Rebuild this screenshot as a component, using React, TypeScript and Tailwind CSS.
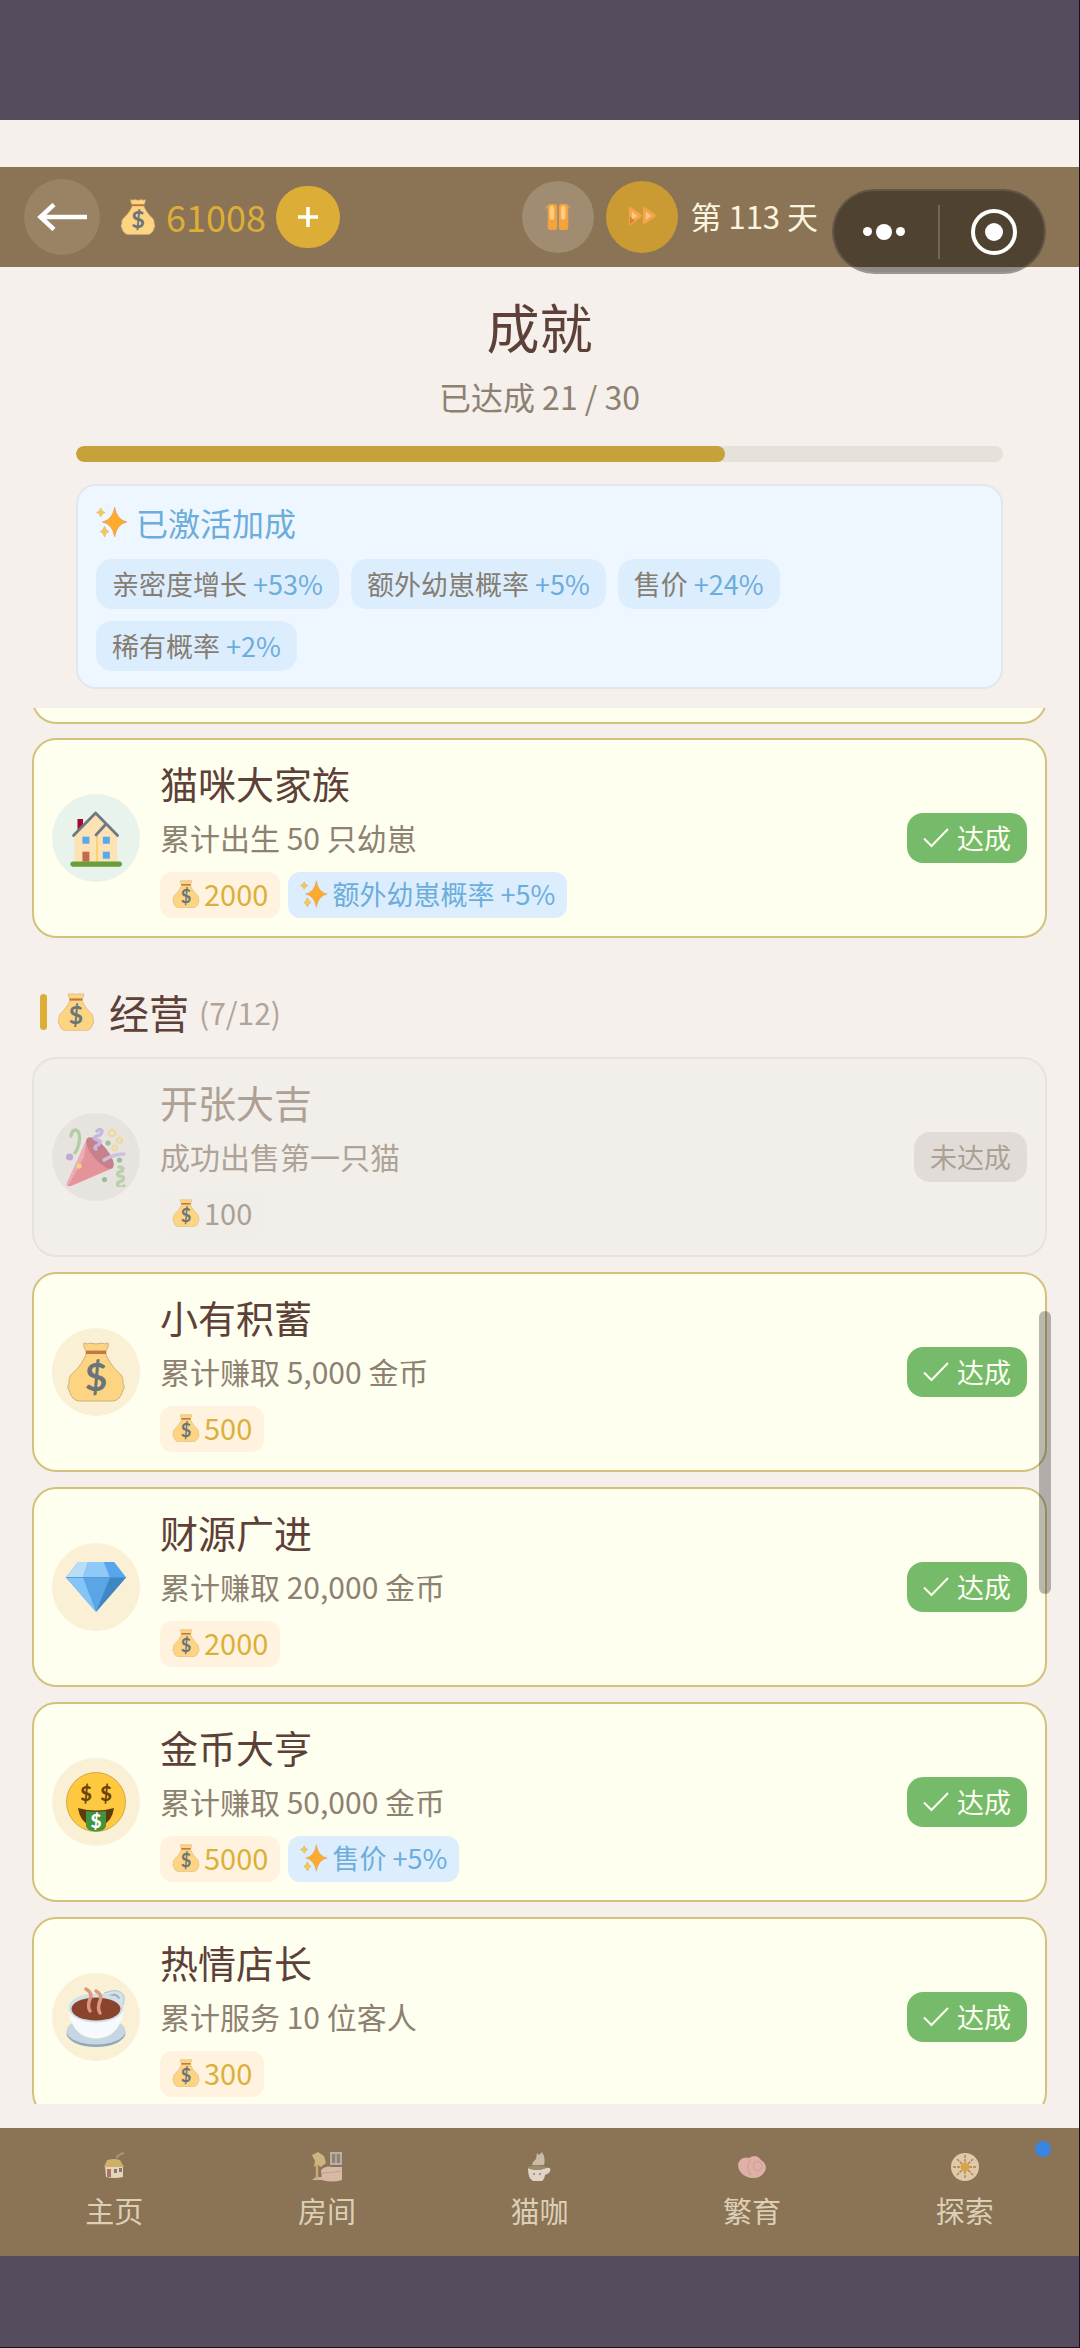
import type { ReactNode } from "react";
import clsx from "clsx";

interface IconProps {
  className?: string;
}

interface Achievement {
  title: string;
  desc: string;
  coins: number;
  bonus?: string;
  done: boolean;
  icon: ReactNode;
  iconBg: string;
}

function MoneyBag({ className }: IconProps) {
  return (
    <svg viewBox="0 0 60 60" className={className} aria-hidden="true">
      <path d="M18 1q3 2 6 0q6 2 12 0q3 2 6 0q1 4-2 8l0 4c4 8 7 12 12 17c5 4 5 7 5 11c2 4 1 6-1 9c0 4-5 9-9 9H13c-4 0-9-5-9-9c-2-3-3-5-1-9c0-4 0-7 5-11c5-5 8-9 12-17v-4q-3-4-2-8z" fill="#fdd482" stroke="#cfae74" strokeWidth="1" />
      <rect x="20" y="8.6" width="20" height="3.4" fill="#c07744" />
      <text x="30" y="49" textAnchor="middle" fontFamily="Lato, sans-serif" fontWeight="700" fontSize="39" fill="#6b7478">$</text>
    </svg>
  );
}

function Sparkles({ className }: IconProps) {
  return (
    <svg viewBox="0 0 60 60" className={className} aria-hidden="true">
      <path d="M35 2q4 24 23 28q-19 4-23 28q-4-24-23-28q19-4 23-28z" fill="#fdab2f" stroke="#d9954a" strokeWidth="1" />
      <path d="M9 4q2 7 8 8q-6 1-8 8q-2-7-8-8q6-1 8-8z" fill="#f9c84f" stroke="#d9a54a" strokeWidth="1" />
      <path d="M16 38q2 8 8 10q-6 2-8 10q-2-8-8-10q6-2 8-10z" fill="#f9c84f" stroke="#d9a54a" strokeWidth="1" />
    </svg>
  );
}

function House({ className }: IconProps) {
  return (
    <svg viewBox="0 0 60 60" className={className} aria-hidden="true">
      <rect x="11.5" y="11" width="5.5" height="12" fill="#a5082a" />
      <path d="M8.5 27L29.6 6l21.5 21v27H8.5z" fill="#fde3b3" />
      <path d="M31 28v26" stroke="#fcc95a" strokeWidth="1.4" />
      <path d="M7.5 27.5L29.6 5l22 22.5M40 16L30 27" fill="none" stroke="#6e7a83" strokeWidth="2.8" strokeLinecap="round" strokeLinejoin="round" />
      <g fill="#55a9ec">
        <rect x="16.4" y="28.7" width="7" height="7" />
        <rect x="36.8" y="28.7" width="7" height="7" />
        <rect x="36.8" y="43.7" width="7" height="7" />
      </g>
      <rect x="16.4" y="43.7" width="7" height="10" fill="#c46a4c" />
      <rect x="4.4" y="53.4" width="51.6" height="5.4" rx="2.7" fill="#689f38" />
    </svg>
  );
}

function PartyPopper({ className }: IconProps) {
  return (
    <svg viewBox="0 0 60 60" className={className} aria-hidden="true">
      <path d="M21 12L1 56q-1 4 4 3l42-18z" fill="#e2455a" />
      <path d="M21 12L1 56q-1 2 1 3l16-29z" fill="#f07a8a" />
      <ellipse cx="34" cy="26" rx="7.5" ry="19.5" transform="rotate(-40 34 26)" fill="#a8203a" />
      <g fill="none" strokeLinecap="round" strokeWidth="3.4">
        <path d="M5 9q1-6 5-6q5 2 3 13q-1 6-4 10" stroke="#7fb56a" />
        <path d="M31 4q3-3 5 0q0 4-5 5q-6 2 0 4q6 1 1 5q-5 2-2 4" stroke="#a78bda" />
        <path d="M38 33q10-6 20-6" stroke="#b39ddb" />
        <path d="M53 40q6 0 3 4q-7 2-3 5q7 0 3 5q-7 1-3 6q4 1 5-1" stroke="#8bc07a" />
      </g>
      <g fill="none" stroke="#f5cf50" strokeWidth="2">
        <circle cx="46" cy="6" r="3.2" />
        <circle cx="53.5" cy="13.5" r="2.6" />
        <circle cx="48.5" cy="21" r="2.3" />
      </g>
      <circle cx="3.6" cy="30" r="3.6" fill="#9575cd" />
      <g fill="#4f9c56">
        <circle cx="42" cy="16" r="2.6" />
        <circle cx="53.5" cy="33" r="2.6" />
        <circle cx="38.5" cy="52.5" r="2.6" />
      </g>
      <circle cx="13" cy="39" r="2.6" fill="#ffca28" />
    </svg>
  );
}

function Diamond({ className }: IconProps) {
  return (
    <svg viewBox="0 0 60 60" className={className} aria-hidden="true">
      <path d="M12 5h36l12 15.5L30 55L0 20.5z" fill="#5aa5e6" />
      <path d="M12 5h10l-5 15.5H0z" fill="#b9dcf7" />
      <path d="M22 5h16l6 15.5H17z" fill="#8ec9f8" />
      <path d="M0 20.5h17L30 55z" fill="#85c4f7" />
      <path d="M44 20.5h16L30 55z" fill="#3f86c4" />
      <path d="M38 5h10l12 15.5H44z" fill="#57a6ec" />
      <path d="M0 20.5h60" stroke="#4b93d3" strokeWidth="0.8" />
    </svg>
  );
}

function MoneyFace({ className }: IconProps) {
  return (
    <svg viewBox="0 0 60 60" className={className} aria-hidden="true">
      <circle cx="30" cy="30" r="29.5" fill="#ffc93f" stroke="#c99a3c" strokeWidth="0.8" />
      <path d="M12 36q18 5 36 0q-2 14-12 17H24q-10-3-12-17z" fill="#5f3a0a" />
      <path d="M20 39q10 1.5 20 0v15q-1 5-10 5.5q-9-.5-10-5.5z" fill="#43923f" />
      <g textAnchor="middle" fontFamily="Lato, sans-serif" fontWeight="900">
        <text x="20" y="29" fontSize="20" fill="#6b4508">$</text>
        <text x="40" y="29" fontSize="20" fill="#6b4508">$</text>
        <text x="30" y="56" fontSize="19" fill="#ffffff">$</text>
      </g>
    </svg>
  );
}

function Coffee({ className }: IconProps) {
  return (
    <svg viewBox="0 0 60 60" className={className} aria-hidden="true">
      <ellipse cx="30" cy="46" rx="29.5" ry="14" fill="#90a8b8" />
      <ellipse cx="30" cy="44" rx="29.5" ry="13.5" fill="#c6d6e2" />
      <path d="M38 6q16-6 20 3q1 8-5 17" fill="#d4e2ea" stroke="#b3c6d2" strokeWidth="1" />
      <path d="M44 9q6-3 9 2" fill="none" stroke="#9fb4c2" strokeWidth="2" strokeLinecap="round" />
      <path d="M2.5 22C4 40 14 51.5 30 51.5S56 40 57.5 22z" fill="#f7fafc" />
      <ellipse cx="30" cy="21" rx="27.5" ry="14.5" fill="#d3e0e8" />
      <ellipse cx="30" cy="22" rx="24.5" ry="11.5" fill="#8a432c" />
      <g fill="none" stroke="#dd9880" strokeWidth="3.4" strokeLinecap="round">
        <path d="M20 2q7 4 4 10q-3 7 0 12" />
        <path d="M30 4q7 4 4 10q-3 7 0 12" />
      </g>
    </svg>
  );
}

function PauseIcon({ className }: IconProps) {
  return (
    <svg viewBox="0 0 30 30" className={className} aria-hidden="true">
      <path d="M1 6q2-3 5-3M29 6q-2-3-5-3" fill="none" stroke="#c9b89a" strokeWidth="1" />
      <rect x="4" y="1" width="10" height="28" rx="3" fill="#f2a33c" />
      <rect x="16" y="1" width="10" height="28" rx="3" fill="#f2a33c" />
      <rect x="6" y="3" width="5" height="15" rx="2.5" fill="#fccb82" />
      <rect x="18" y="3" width="5" height="15" rx="2.5" fill="#fccb82" />
    </svg>
  );
}

function FastForwardIcon({ className }: IconProps) {
  return (
    <svg viewBox="0 0 30 30" className={className} aria-hidden="true">
      <path d="M1 6q0-3 3-1l10 7q2 1.5 0 3L4 23q-3 1-3-1z" fill="#f4a548" />
      <path d="M16 6q0-3 3-1l10 7q2 1.5 0 3l-10 7q-3 1-3-1z" fill="#f4a548" />
      <path d="M4 9l6 5l-6 4zM19 9l6 5l-6 4z" fill="#f9c98a" />
      <path d="M2 14v9l5-4z" fill="#e07f32" />
    </svg>
  );
}

function HomeNavIcon({ className }: IconProps) {
  return (
    <svg viewBox="0 0 34 34" className={className} aria-hidden="true">
      <path d="M19 8q3-4 8-5" stroke="#a8957a" strokeWidth="2" fill="none" />
      <path d="M8 16h18v11q-9 2-17 0z" fill="#e3d6bd" />
      <path d="M10 10q8-2 13 0l4 7H7z" fill="#cdb167" />
      <rect x="10" y="19" width="4" height="8" fill="#ad7363" />
      <rect x="17" y="19" width="3" height="4" fill="#807a70" />
      <rect x="22" y="18" width="3" height="4" fill="#807a70" />
    </svg>
  );
}

function RoomNavIcon({ className }: IconProps) {
  return (
    <svg viewBox="0 0 34 34" className={className} aria-hidden="true">
      <path d="M2 30h27l3-3H6z" fill="#cdb5a0" />
      <path d="M2 5l6-3l6 4l2 7l-5 4l-3-2l-4 2l1-6z" fill="#cdb47e" />
      <path d="M7 14v15" stroke="#c4a878" strokeWidth="2.5" />
      <rect x="20" y="2" width="12" height="13" fill="#b9afa2" />
      <rect x="22" y="4" width="8" height="9" fill="#8d8577" />
      <path d="M26 4v9" stroke="#d0c6b8" />
      <path d="M11 20q5-5 11-3l10 0v13q-10 3-20 0z" fill="#d7b9a6" />
      <path d="M12 23q10 0 19-2" stroke="#c3a08e" fill="none" />
    </svg>
  );
}

function CafeNavIcon({ className }: IconProps) {
  return (
    <svg viewBox="0 0 34 34" className={className} aria-hidden="true">
      <path d="M10 15q1-4 4-6l1-6l2 2l3-3q4 6 2 13z" fill="#c9bba5" />
      <path d="M6 18q9 4 18 0q7-1 3 5l-4 2q-1 6-4 6h-8q-5-2-5-13z" fill="#dfd4c6" />
      <ellipse cx="15" cy="17.5" rx="9" ry="2.2" fill="#9c8a70" />
      <circle cx="12" cy="24" r="1" fill="#8f8270" />
      <circle cx="18" cy="24" r="1" fill="#8f8270" />
    </svg>
  );
}

function BreedNavIcon({ className }: IconProps) {
  return (
    <svg viewBox="0 0 34 34" className={className} aria-hidden="true">
      <path d="M3 14q3-8 11-6q7-5 12 2q7 5 4 11q-4 8-14 7Q3 25 3 14z" fill="#deb0a7" />
      <path d="M15 10q-5 8 1 15M19 13q5-3 8 1q1 6-5 7q-5-2-3-8z" fill="none" stroke="#d3a09a" strokeWidth="1.2" />
    </svg>
  );
}

function ExploreNavIcon({ className }: IconProps) {
  return (
    <svg viewBox="0 0 34 34" className={className} aria-hidden="true">
      <circle cx="17" cy="17" r="14" fill="#e0c9a6" />
      <path d="M17 5v24M5 17h24M9 9l16 16M25 9L9 25" stroke="#a8835c" strokeWidth="1.4" strokeDasharray="3 1" />
      <circle cx="17" cy="17" r="4.5" fill="#d9a544" />
    </svg>
  );
}

const bonuses = [
  { label: "亲密度增长", value: "+53%" },
  { label: "额外幼崽概率", value: "+5%" },
  { label: "售价", value: "+24%" },
  { label: "稀有概率", value: "+2%" },
];

const family: Achievement[] = [
  { title: "猫咪大家族", desc: "累计出生 50 只幼崽", coins: 2000, bonus: "额外幼崽概率 +5%", done: true, icon: <House className="size-[60px]" />, iconBg: "bg-[#e8f3ec]" },
];

const business: Achievement[] = [
  { title: "开张大吉", desc: "成功出售第一只猫", coins: 100, done: false, icon: <PartyPopper className="size-[60px]" />, iconBg: "bg-[#e7e4df]" },
  { title: "小有积蓄", desc: "累计赚取 5,000 金币", coins: 500, done: true, icon: <MoneyBag className="size-[60px]" />, iconBg: "bg-[#faf0d5]" },
  { title: "财源广进", desc: "累计赚取 20,000 金币", coins: 2000, done: true, icon: <Diamond className="size-[60px]" />, iconBg: "bg-[#faf0d5]" },
  { title: "金币大亨", desc: "累计赚取 50,000 金币", coins: 5000, bonus: "售价 +5%", done: true, icon: <MoneyFace className="size-[60px]" />, iconBg: "bg-[#faf0d5]" },
  { title: "热情店长", desc: "累计服务 10 位客人", coins: 300, done: true, icon: <Coffee className="size-[60px]" />, iconBg: "bg-[#faf0d5]" },
];

const tabs = [
  { label: "主页", icon: <HomeNavIcon className="size-[34px]" /> },
  { label: "房间", icon: <RoomNavIcon className="size-[34px]" /> },
  { label: "猫咖", icon: <CafeNavIcon className="size-[34px]" /> },
  { label: "繁育", icon: <BreedNavIcon className="size-[34px]" /> },
  { label: "探索", icon: <ExploreNavIcon className="size-[34px]" /> },
];

function AchievementCard({ item }: { item: Achievement }) {
  return (
    <li
      className={clsx(
        "flex items-center gap-5 rounded-3xl border-2 p-[18px]",
        item.done ? "border-[#d2c27c] bg-[#fffff0]" : "border-[#e6e2dd] bg-[#f2efeb]"
      )}
    >
      <div className={clsx("flex size-[88px] shrink-0 items-center justify-center rounded-full", item.iconBg)}>
        <div className={clsx(!item.done && "opacity-50")}>{item.icon}</div>
      </div>
      <div className="min-w-0 flex-1">
        <h3 className={clsx("text-[38px] leading-[50px]", item.done ? "text-[#5d4037]" : "text-[#aea093]")}>{item.title}</h3>
        <p className={clsx("text-[30px] leading-[58px]", item.done ? "text-[#8d8171]" : "text-[#aea396]")}>{item.desc}</p>
        <div className="mt-1.5 flex gap-2">
          <span
            className={clsx(
              "flex h-[46px] items-center gap-1 rounded-xl px-3 pb-0.5 text-[29px]",
              item.done ? "bg-[#fff3e0] text-[#dbb03a]" : "bg-[#f1eeea] text-[#aaa196]"
            )}
          >
            <MoneyBag className="size-7" />
            {item.coins}
          </span>
          {item.bonus && (
            <span className="flex h-[46px] items-center gap-1 rounded-xl bg-[#dceefe] px-3 pb-0.5 text-[27px] text-[#6caddc]">
              <Sparkles className="size-7" />
              {item.bonus}
            </span>
          )}
        </div>
      </div>
      {item.done ? (
        <span className="flex h-[50px] items-center gap-2 rounded-2xl bg-[#75bb69] px-4 text-[27px] text-[#fdfff0]">
          <svg viewBox="0 0 26 26" className="size-[26px]" fill="none" stroke="currentColor" strokeWidth="2" aria-hidden="true">
            <path d="M1 13.5L8.5 21L25 4" />
          </svg>
          达成
        </span>
      ) : (
        <span className="flex h-[50px] items-center rounded-2xl bg-[#e2dcd8] px-4 text-[27px] text-[#aaa194]">未达成</span>
      )}
    </li>
  );
}

export default function App() {
  return (
    <div className="flex h-screen flex-col overflow-hidden border-r border-b border-[#15121a] bg-[#f5f0ec] font-['Noto_Sans_CJK_SC',sans-serif]">
      <div className="h-[120px] shrink-0 bg-[#554c5d]" />

      <header className="relative mt-[47px] flex h-[100px] shrink-0 items-center bg-[#8b7355] pr-[261px] pl-6">
        <button aria-label="返回" className="flex size-[76px] items-center justify-center rounded-full bg-[#998364]">
          <svg viewBox="0 0 50 28" className="h-7 w-[50px]" fill="none" stroke="#ffffff" strokeWidth="4.5" aria-hidden="true">
            <path d="M50 14H3M17 1.5L3.5 14L17 26.5" />
          </svg>
        </button>
        <MoneyBag className="ml-5 size-9" />
        <span className="ml-2.5 pb-0.5 text-4xl text-[#dcae37]">61008</span>
        <button aria-label="增加金币" className="ml-2.5 flex h-[62px] w-16 items-center justify-center rounded-full bg-[#dcae37]">
          <svg viewBox="0 0 20 20" className="size-5" stroke="#ffffff" strokeWidth="3.6" aria-hidden="true">
            <path d="M10 0v20M0 10h20" />
          </svg>
        </button>

        <button aria-label="暂停" className="ml-auto flex size-[72px] items-center justify-center rounded-full bg-[#a08c70]">
          <PauseIcon className="size-7" />
        </button>
        <button aria-label="快进" className="ml-3 flex size-[72px] items-center justify-center rounded-full bg-[#ca9b32]">
          <FastForwardIcon className="size-7" />
        </button>
        <span className="ml-3 pb-0.5 text-[31px] whitespace-nowrap text-[#fbf5df]">第 113 天</span>

        {/* mini-program capsule floats above the header edge */}
        <div className="absolute top-[22px] right-[33px] flex h-[85px] w-[214px] items-center rounded-full border-2 border-white/10 bg-black/42">
          <button aria-label="更多" className="flex h-full flex-1 items-center justify-center gap-1 pr-1">
            <span className="size-[9px] rounded-full bg-white" />
            <span className="size-4 rounded-full bg-white" />
            <span className="size-[9px] rounded-full bg-white" />
          </button>
          <span className="h-[54px] w-0.5 bg-white/20" />
          <button aria-label="关闭" className="flex h-full flex-1 items-center justify-center pl-1">
            <span className="flex size-[46px] items-center justify-center rounded-full border-4 border-white">
              <span className="size-[18px] rounded-full bg-white" />
            </span>
          </button>
        </div>
      </header>

      <section className="shrink-0 px-[76px] pt-[27px] pb-[19px]">
        <h1 className="text-center text-[53px] leading-[64px] text-[#5d4037]">成就</h1>
        <p className="mt-4 text-center text-[32px] leading-[44px] text-[#8d8171]">已达成 21 / 30</p>
        <div className="mt-7 h-4 overflow-hidden rounded-full bg-[#e5e1db]">
          <div className="h-full rounded-full bg-[#c7a13a]" style={{ width: `${(21 / 30) * 100}%` }} />
        </div>

        <div className="mt-[22px] rounded-[20px] border-2 border-[#dfe8ee] bg-[#eef7ff] px-[18px] py-4">
          <h2 className="flex items-center gap-2 text-[32px] leading-10 text-[#6caddc]">
            <Sparkles className="size-8" />
            已激活加成
          </h2>
          <ul className="mt-[17px] flex flex-wrap gap-3">
            {bonuses.map((b) => (
              <li key={b.label} className="rounded-2xl bg-[#dceefe] px-4 text-[27px] leading-[50px] text-[#857d72]">
                {b.label} <span className="text-[#6caddc]">{b.value}</span>
              </li>
            ))}
          </ul>
        </div>
      </section>

      <main className="relative min-h-0 flex-1 overflow-hidden px-8">
        {/* tail of the card scrolled out above */}
        <div className="-mt-6 h-10 rounded-b-3xl border-2 border-t-0 border-[#d2c27c] bg-[#fffff0]" />
        <ul className="mt-3.5 flex flex-col gap-[15px]">
          {family.map((item) => (
            <AchievementCard key={item.title} item={item} />
          ))}
        </ul>

        <h2 className="mt-[54px] mb-[25px] ml-2 flex h-10 items-center text-[40px] text-[#5d4037]">
          <span className="h-9 w-[7px] rounded-full bg-[#dcae37]" />
          <MoneyBag className="ml-2.5 size-[38px]" />
          <span className="ml-3.5">经营</span>
          <span className="ml-2.5 text-[30px] text-[#b0a598]">(7/12)</span>
        </h2>
        <ul className="flex flex-col gap-[15px]">
          {business.map((item) => (
            <AchievementCard key={item.title} item={item} />
          ))}
        </ul>

        <div className="absolute top-[603px] right-7 h-[283px] w-3 rounded-full bg-black/28" />
      </main>

      <nav className="relative mt-6 grid h-32 shrink-0 grid-cols-5 bg-[#8b7355] px-2">
        {tabs.map((t) => (
          <a key={t.label} href="#" className="flex flex-col items-center pt-[22px] text-[29px] leading-[40px] text-[#dccfb5]">
            {t.icon}
            <span className="mt-1.5">{t.label}</span>
          </a>
        ))}
        <span className="absolute top-[13px] right-7 size-4 rounded-full bg-[#3a84e2]" />
      </nav>

      <div className="h-[91px] shrink-0 bg-[#554c5d]" />
    </div>
  );
}
